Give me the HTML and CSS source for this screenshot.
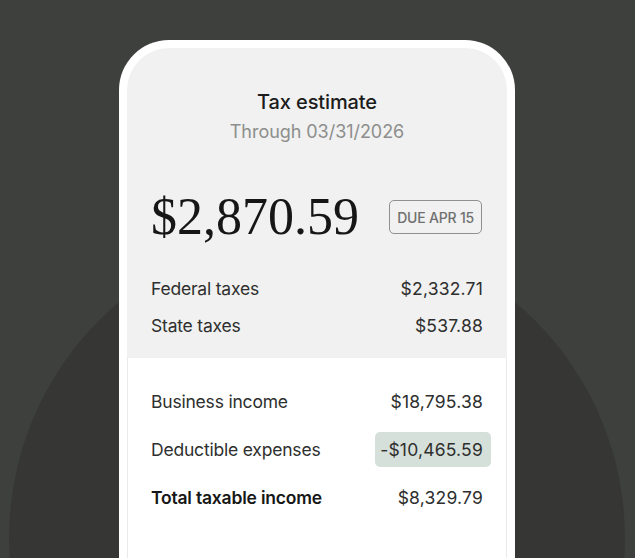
FILE: index.html
```html
<!DOCTYPE html>
<html lang="en">
<head>
<meta charset="utf-8">
<title>Tax estimate</title>
<link rel="stylesheet" href="styles.css">
</head>
<body>
<div class="scene">
  <div class="phone">
    <div class="summary">
      <h1 class="title">Tax estimate</h1>
      <p class="subtitle">Through 03/31/2026</p>
      <div class="total-row">
        <span class="amount">$2,870.59</span>
        <span class="badge">DUE APR 15</span>
      </div>
      <div class="rows upper">
        <div class="row"><span>Federal taxes</span><span class="num">$2,332.71</span></div>
        <div class="row"><span>State taxes</span><span class="num">$537.88</span></div>
      </div>
    </div>
    <div class="details">
      <div class="rows lower">
        <div class="row"><span>Business income</span><span class="num">$18,795.38</span></div>
        <div class="row"><span>Deductible expenses</span><span class="num highlight">-$10,465.59</span></div>
        <div class="row strong"><span>Total taxable income</span><span class="num">$8,329.79</span></div>
      </div>
    </div>
  </div>
</div>
</body>
</html>
```

FILE: styles.css
```css
html, body {
  margin: 0;
  padding: 0;
  height: 100%;
}
body {
  background: #3e403d;
  overflow: hidden;
  font-family: Inter, "Liberation Sans", sans-serif;
}
.scene {
  position: relative;
  height: 558px;
  overflow: hidden;
  padding-top: 40px;
  box-sizing: border-box;
}
.scene::before {
  content: "";
  position: absolute;
  left: 9px;
  top: 230px;
  width: 616px;
  height: 616px;
  border-radius: 50%;
  background: #363735;
}
.phone {
  position: relative;
  margin-left: 119px;
  width: 396px;
  height: 518px;
  box-sizing: border-box;
  padding: 8px 8px 0;
  background: #ffffff;
  border-radius: 50px 50px 0 0;
  display: flex;
  flex-direction: column;
}
.summary {
  background: #f0f1f0;
  border-radius: 42px 42px 0 0;
  height: 310px;
  box-sizing: border-box;
  padding: 42px 24px 0;
  display: flex;
  flex-direction: column;
}
.title {
  margin: 0;
  text-align: center;
  font-size: 20px;
  line-height: 24px;
  font-weight: 500;
  color: #1b1c1b;
  letter-spacing: -0.1px;
}
.subtitle {
  margin: 6px 0 0;
  text-align: center;
  font-size: 18px;
  line-height: 24px;
  font-weight: 400;
  color: #8d8e8d;
  letter-spacing: -0.05px;
}
.total-row {
  margin-top: 47px;
  display: flex;
  align-items: center;
  justify-content: space-between;
}
.amount {
  font-family: "Liberation Serif", "DejaVu Serif", serif;
  font-size: 52px;
  line-height: 52px;
  color: #151615;
}
.badge {
  margin-right: 1px;
  height: 34px;
  box-sizing: border-box;
  padding: 0 7px;
  display: flex;
  align-items: center;
  border: 1.5px solid #8f908f;
  border-radius: 5px;
  font-size: 14px;
  font-weight: 500;
  color: #6f706f;
  letter-spacing: -0.2px;
}
.rows {
  display: flex;
  flex-direction: column;
}
.row {
  display: flex;
  align-items: center;
  justify-content: space-between;
  font-size: 17.5px;
  line-height: 22px;
  font-weight: 400;
  color: #2e2f2e;
  letter-spacing: -0.2px;
}
.num {
  letter-spacing: 0.2px;
}
.upper {
  margin-top: 35px;
  gap: 15px;
}
.details {
  flex: 1;
  background: #ffffff;
  border-left: 1px solid #e9eae9;
  border-right: 1px solid #e9eae9;
  padding: 0 23px;
}
.lower {
  margin-top: 33px;
  gap: 26px;
}
.highlight {
  background: #d6e0da;
  border-radius: 5px;
  padding: 7px 8px 6px 5px;
  margin: -7px -8px -6px 0;
}
.strong span:first-child {
  font-weight: 600;
  color: #161716;
}
```
